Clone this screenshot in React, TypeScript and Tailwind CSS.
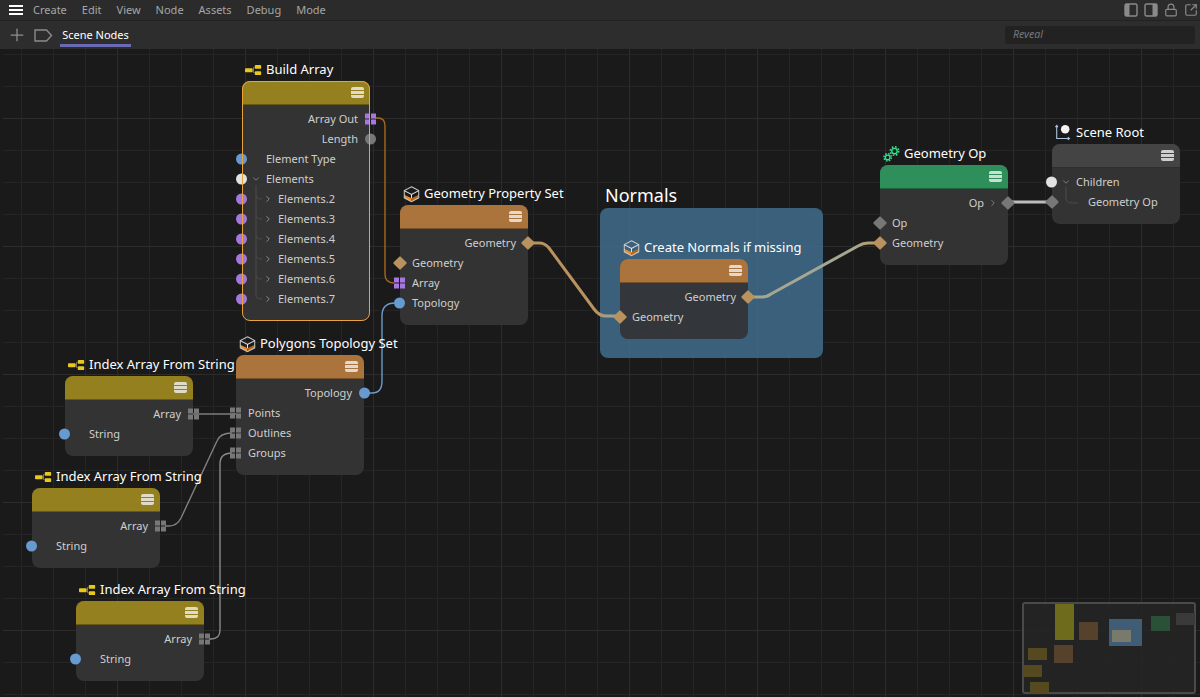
import { ChevronDown, ChevronRight, Lock, Plus, SquareArrowOutUpRight } from "lucide-react";

type Row = {
  label: string;
  side: "l" | "r";
  port: "dot" | "diamond" | "grid";
  color: string;
  pad: string;
  chev?: "down" | "right";
};

type NodeDef = {
  title: string;
  pos: string;
  head: string;
  icon: "array" | "cube" | "gears" | "root";
  body?: string;
  selected?: boolean;
  tree?: string;
  rows: Row[];
};

const BLUE = "bg-[#669ad0]";
const WHITE = "bg-[#e2e2e2]";
const PURPLE = "bg-[#a677e0]";
const TAN = "bg-[#b9935f]";
const GREY = "bg-[#777777]";
const YELLOW = "bg-[#95801f]";
const ORANGE = "bg-[#ab743d]";

const elementRows: Row[] = ["2", "3", "4", "5", "6", "7"].map((n) => ({
  label: `Elements.${n}`,
  side: "l",
  port: "dot",
  color: PURPLE,
  pad: "pl-[21px]",
  chev: "right",
}));

const indexRows: Row[] = [
  { label: "Array", side: "r", port: "grid", color: GREY, pad: "pr-3" },
  { label: "String", side: "l", port: "dot", color: BLUE, pad: "pl-6" },
];

const nodes: NodeDef[] = [
  {
    title: "Build Array",
    pos: "left-[242px] top-[10px]",
    head: YELLOW,
    icon: "array",
    selected: true,
    tree: "M14 104V214Q14 218 20 218M14 114Q14 118 20 118M14 134Q14 138 20 138M14 154Q14 158 20 158M14 174Q14 178 20 178M14 194Q14 198 20 198",
    rows: [
      { label: "Array Out", side: "r", port: "grid", color: PURPLE, pad: "pr-3" },
      { label: "Length", side: "r", port: "dot", color: GREY, pad: "pr-3" },
      { label: "Element Type", side: "l", port: "dot", color: BLUE, pad: "pl-6" },
      { label: "Elements", side: "l", port: "dot", color: WHITE, pad: "pl-[9px]", chev: "down" },
      ...elementRows,
    ],
  },
  {
    title: "Geometry Property Set",
    pos: "left-[400px] top-[134px]",
    head: ORANGE,
    icon: "cube",
    rows: [
      { label: "Geometry", side: "r", port: "diamond", color: TAN, pad: "pr-3" },
      { label: "Geometry", side: "l", port: "diamond", color: TAN, pad: "pl-3" },
      { label: "Array", side: "l", port: "grid", color: PURPLE, pad: "pl-3" },
      { label: "Topology", side: "l", port: "dot", color: BLUE, pad: "pl-3" },
    ],
  },
  {
    title: "Create Normals if missing",
    pos: "left-[620px] top-[188px]",
    head: ORANGE,
    icon: "cube",
    body: "bg-[#33363a]",
    rows: [
      { label: "Geometry", side: "r", port: "diamond", color: TAN, pad: "pr-3" },
      { label: "Geometry", side: "l", port: "diamond", color: TAN, pad: "pl-3" },
    ],
  },
  {
    title: "Geometry Op",
    pos: "left-[880px] top-[94px]",
    head: "bg-[#2f8f5b]",
    icon: "gears",
    rows: [
      { label: "Op", side: "r", port: "diamond", color: GREY, pad: "pr-[10px]", chev: "right" },
      { label: "Op", side: "l", port: "diamond", color: GREY, pad: "pl-3" },
      { label: "Geometry", side: "l", port: "diamond", color: TAN, pad: "pl-3" },
    ],
  },
  {
    title: "Scene Root",
    pos: "left-[1052px] top-[73px]",
    head: "bg-[#444444]",
    icon: "root",
    tree: "M14 43V54Q14 59 20 59H26",
    rows: [
      { label: "Children", side: "l", port: "dot", color: WHITE, pad: "pl-[9px]", chev: "down" },
      { label: "Geometry Op", side: "l", port: "diamond", color: GREY, pad: "pl-9" },
    ],
  },
  {
    title: "Polygons Topology Set",
    pos: "left-[236px] top-[284px]",
    head: ORANGE,
    icon: "cube",
    rows: [
      { label: "Topology", side: "r", port: "dot", color: BLUE, pad: "pr-3" },
      { label: "Points", side: "l", port: "grid", color: GREY, pad: "pl-3" },
      { label: "Outlines", side: "l", port: "grid", color: GREY, pad: "pl-3" },
      { label: "Groups", side: "l", port: "grid", color: GREY, pad: "pl-3" },
    ],
  },
  { title: "Index Array From String", pos: "left-[65px] top-[305px]", head: YELLOW, icon: "array", rows: indexRows },
  { title: "Index Array From String", pos: "left-[32px] top-[417px]", head: YELLOW, icon: "array", rows: indexRows },
  { title: "Index Array From String", pos: "left-[76px] top-[530px]", head: YELLOW, icon: "array", rows: indexRows },
];

function NodeIcon({ icon }: { icon: NodeDef["icon"] }) {
  if (icon === "array") {
    return (
      <svg width="20" height="14" viewBox="0 0 20 14" fill="none">
        <rect x="0" y="5" width="9" height="4.5" rx="1" fill="#e8c81e" />
        <path d="M11 4H10V10H11" stroke="#8a8a8a" />
        <rect x="11.5" y="1" width="7.5" height="4.5" rx="1" fill="#e8c81e" />
        <rect x="11.5" y="8.5" width="7.5" height="4.5" rx="1" fill="#e8c81e" />
      </svg>
    );
  }
  if (icon === "cube") {
    return (
      <svg width="20" height="20" viewBox="0 0 20 20" fill="none">
        <path d="M1.5 11V14.5L10 19V15Z" fill="#f28a1e" />
        <path d="M18.5 11V14.5L10 19V15Z" fill="#b9651a" />
        <path d="M10 1.5L18.5 6V14.5L10 19L1.5 14.5V6Z" stroke="#c8c8c8" strokeWidth="1.2" />
        <path d="M1.5 6L10 10.5L18.5 6M10 10.5V15" stroke="#e6e6e6" strokeWidth="1.2" />
      </svg>
    );
  }
  if (icon === "gears") {
    return (
      <svg width="20" height="20" viewBox="0 0 20 20" fill="none" stroke="#35e08c">
        <circle cx="13.5" cy="6.5" r="3.2" strokeWidth="1.6" />
        <circle cx="13.5" cy="6.5" r="5" strokeWidth="1.8" strokeDasharray="2 1.93" />
        <circle cx="5.5" cy="14" r="2.7" strokeWidth="1.6" />
        <circle cx="5.5" cy="14" r="4.3" strokeWidth="1.8" strokeDasharray="1.8 1.58" />
      </svg>
    );
  }
  return (
    <svg width="20" height="20" viewBox="0 0 20 20" fill="none">
      <path d="M2 1V16.5H17M0.5 3L2 1L3.5 3M15 15L17 16.5L15 18" stroke="#a9c2de" strokeWidth="1.3" />
      <circle cx="12" cy="5.5" r="5" fill="#f5f5f5" />
    </svg>
  );
}

function Port({ row }: { row: Row }) {
  const place = row.side === "l" ? "-left-[6px]" : "-right-[6px]";
  if (row.port === "dot") {
    return <span className={`absolute top-1/2 -translate-y-1/2 w-[11px] h-[11px] rounded-full ${place} ${row.color}`} />;
  }
  if (row.port === "diamond") {
    return <span className={`absolute top-[5px] w-[10px] h-[10px] rotate-45 rounded-[1px] ${row.side === "l" ? "-left-[5px]" : "-right-[5px]"} ${row.color}`} />;
  }
  return (
    <span className={`absolute top-1/2 -translate-y-1/2 grid grid-cols-2 gap-px ${place}`}>
      <i className={`block w-[5px] h-[5px] ${row.color}`} />
      <i className={`block w-[5px] h-[5px] ${row.color}`} />
      <i className={`block w-[5px] h-[5px] ${row.color}`} />
      <i className={`block w-[5px] h-[5px] ${row.color}`} />
    </span>
  );
}

function GraphNode({ node }: { node: NodeDef }) {
  return (
    <div className={`absolute w-32 ${node.pos}`}>
      <div className="h-[22px] flex items-center gap-1 pl-[3px] whitespace-nowrap text-[13px] text-white">
        <span className="w-[17px] flex justify-center shrink-0">
          <NodeIcon icon={node.icon} />
        </span>
        {node.title}
      </div>
      <div className={`relative rounded-lg pb-3 ${node.body ?? "bg-[#333333]"}`}>
        <div className={`h-6 rounded-t-lg border-b border-black/30 flex justify-end items-center pr-[6px] ${node.head}`}>
          <div className="flex flex-col gap-px w-[13px] opacity-80">
            <span className="h-[3px] rounded-t-[2px] bg-[#f2f2f2]" />
            <span className="h-[3px] bg-[#f2f2f2]" />
            <span className="h-[3px] rounded-b-[2px] bg-[#f2f2f2]" />
          </div>
        </div>
        {node.tree && (
          <svg className="absolute left-0 top-0" width="40" height="230" fill="none" stroke="#4c4c4c">
            <path d={node.tree} />
          </svg>
        )}
        <div className="pt-1 text-[11px] text-[#cfcfcf]">
          {node.rows.map((row, i) => (
            <div key={i} className={`relative h-5 flex items-center ${row.side === "r" ? "justify-end" : ""} ${row.pad}`}>
              {row.side === "l" && row.chev === "down" && <ChevronDown size={10} className="text-[#8a8a8a] mr-[5px]" />}
              {row.side === "l" && row.chev === "right" && <ChevronRight size={10} className="text-[#9a9a9a] mr-[5px]" />}
              {row.label}
              {row.side === "r" && row.chev === "right" && <ChevronRight size={10} className="text-[#8a8a8a] ml-1" />}
              <Port row={row} />
            </div>
          ))}
        </div>
        {node.selected && <div className="absolute inset-0 rounded-lg border border-[#e8a33d]" />}
      </div>
    </div>
  );
}

function Wires() {
  return (
    <svg className="absolute inset-0" width="1200" height="648" viewBox="0 49 1200 648" fill="none">
      <defs>
        <linearGradient id="wireA" gradientUnits="userSpaceOnUse" x1="750" y1="0" x2="880" y2="0">
          <stop offset="0" stopColor="#a5a792" />
          <stop offset="0.8" stopColor="#a5a792" />
          <stop offset="1" stopColor="#c09a62" />
        </linearGradient>
        <linearGradient id="wireB" gradientUnits="userSpaceOnUse" x1="530" y1="0" x2="620" y2="0">
          <stop offset="0" stopColor="#b9935f" />
          <stop offset="0.75" stopColor="#b9935f" />
          <stop offset="0.85" stopColor="#a5a08a" />
          <stop offset="1" stopColor="#a5a08a" />
        </linearGradient>
      </defs>
      <path d="M375 118H378Q385 118 385 126V274Q385 283 394 283" stroke="#a9691c" strokeWidth="1.4" />
      <path d="M369 393H372Q382 393 382 381V316Q382 303 395 303" stroke="#6a9bc9" strokeWidth="1.4" />
      <path d="M530 243H539Q545 243 549 248L594 309Q599 316 606 316H616" stroke="url(#wireB)" strokeWidth="3" />
      <path d="M750 297H762Q767 297 771 294L858 246Q863 243 868 243H880" stroke="url(#wireA)" strokeWidth="3" />
      <path d="M1007 202H1052" stroke="#bdbdbd" strokeWidth="3" />
      <path d="M193 414H236" stroke="#7c7c7c" strokeWidth="1.4" />
      <path d="M165 526H169Q177 526 181 518L217 441Q220 433 232 433" stroke="#808080" strokeWidth="1.4" />
      <path d="M209 639H211Q220 639 220 630V464Q220 453 232 453" stroke="#8a8a8a" strokeWidth="1.4" />
    </svg>
  );
}

function PanelIcon({ right }: { right?: boolean }) {
  return (
    <svg width="14" height="14" viewBox="0 0 14 14" fill="none">
      <rect x="1" y="1" width="12" height="12" rx="1.5" stroke="#8a8a8a" strokeWidth="1.4" />
      <rect x={right ? 8.5 : 1} y="1" width="4.5" height="12" fill="#8a8a8a" />
    </svg>
  );
}

const minimapRects = [
  { x: 33, y: 2, w: 19, h: 36, fill: "#6f6b1c" },
  { x: 57, y: 20, w: 19, h: 18, fill: "#56412c" },
  { x: 87, y: 17, w: 33, h: 27, fill: "#3f5d75" },
  { x: 90, y: 28, w: 19, h: 12, fill: "#7a7a6c" },
  { x: 129, y: 14, w: 19, h: 15, fill: "#2a5138" },
  { x: 154, y: 11, w: 19, h: 12, fill: "#3a3a3a" },
  { x: 6, y: 46, w: 19, h: 12, fill: "#55491f" },
  { x: 32, y: 43, w: 19, h: 18, fill: "#56412c" },
  { x: 1, y: 63, w: 19, h: 12, fill: "#55491f" },
  { x: 8, y: 80, w: 19, h: 12, fill: "#55491f" },
];

export default function App() {
  return (
    <div className="w-[1200px] h-[697px] overflow-hidden flex flex-col bg-[#1a1a1a] font-['Noto_Sans',sans-serif]">
      <div className="h-[21px] shrink-0 bg-[#2b2b2b] border-b border-[#222222] flex items-center pl-[9px] pr-[2px] text-[11px] text-[#a6a6a6]">
        <div className="flex flex-col gap-[2px] w-[14px] mr-[10px]">
          <span className="h-[2px] bg-white" />
          <span className="h-[2px] bg-white" />
          <span className="h-[2px] bg-white" />
        </div>
        <div className="flex gap-[15px]">
          {["Create", "Edit", "View", "Node", "Assets", "Debug", "Mode"].map((m) => (
            <span key={m}>{m}</span>
          ))}
        </div>
        <div className="ml-auto flex items-center gap-[6px]">
          <PanelIcon />
          <PanelIcon right />
          <Lock size={14} className="text-[#8a8a8a]" />
          <SquareArrowOutUpRight size={14} className="text-[#8a8a8a]" />
        </div>
      </div>

      <div className="h-7 shrink-0 bg-[#2d2d2d] flex items-center pl-[7px] pr-[5px]">
        <Plus size={20} strokeWidth={1.5} className="text-[#8f8f8f]" />
        <svg className="ml-[7px]" width="19" height="13" viewBox="0 0 19 13" fill="none">
          <path d="M1 1H12.5L17.5 6.5L12.5 12H1Z" stroke="#8a8a8a" strokeWidth="1.4" />
        </svg>
        <div className="relative ml-[7px] h-full w-[71px] flex items-center justify-center text-[11px] text-white">
          Scene Nodes
          <span className="absolute left-0 right-0 bottom-[2px] h-[3px] bg-[#6a6ab4]" />
        </div>
        <div className="ml-auto w-[190px] h-[18px] rounded-[3px] bg-[#222222] pl-2 flex items-center text-[10.5px] italic text-[#777777]">
          Reveal
        </div>
      </div>

      <div className="relative flex-1 bg-[#1a1a1a] bg-[linear-gradient(to_right,#2c2c2c_1px,transparent_1px),linear-gradient(to_bottom,#2c2c2c_1px,transparent_1px),linear-gradient(to_right,#252525_1px,transparent_1px),linear-gradient(to_bottom,#252525_1px,transparent_1px)] bg-[size:128px_128px,128px_128px,32px_32px,32px_32px] bg-[position:117px_69px,117px_69px,21px_5px,21px_5px]">
        <div className="absolute left-0 inset-y-0 w-[3px] bg-[#1a1a1a]" />
        <div className="absolute left-[605px] top-[134px] text-[18px] leading-6 text-white">Normals</div>
        <div className="absolute left-[600px] top-[159px] w-[223px] h-[150px] rounded-lg bg-[#427294]/80" />
        <Wires />
        {nodes.map((node, i) => (
          <GraphNode key={i} node={node} />
        ))}
        <svg className="absolute left-[1022px] top-[553px]" width="174" height="92" viewBox="0 0 174 92" fill="none">
          <rect x="1" y="1" width="172" height="90" rx="2" fill="#262626" fillOpacity="0.85" stroke="#4a4a4a" strokeWidth="2" />
          {minimapRects.map((r, i) => (
            <rect key={i} x={r.x} y={r.y} width={r.w} height={r.h} fill={r.fill} />
          ))}
        </svg>
      </div>
    </div>
  );
}
